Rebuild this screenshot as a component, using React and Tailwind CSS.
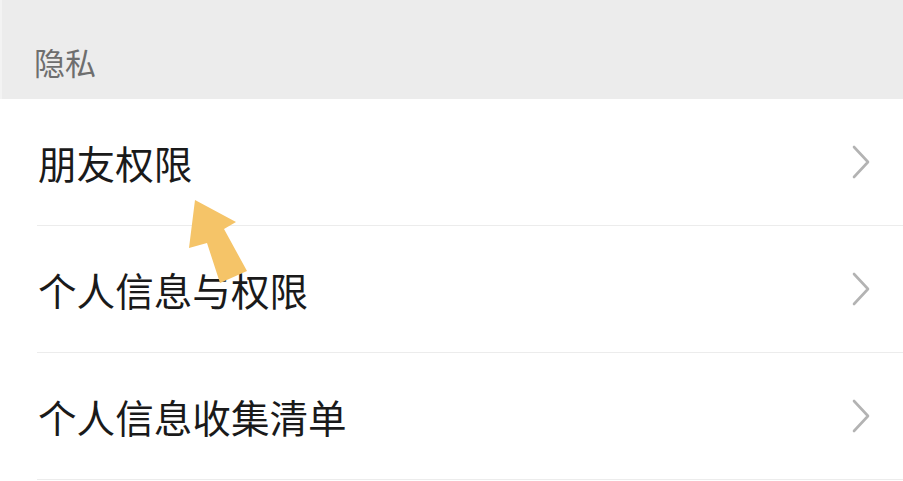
import React from "react";

const font = { fontFamily: '"Noto Sans CJK SC", "Noto Sans", sans-serif' };

function Chevron() {
  return (
    <svg width="20" height="34" viewBox="0 0 20 34" className="shrink-0">
      <path d="M3 2 L17 17 L3 32" fill="none" stroke="#b3b3b3" strokeWidth="2.6" strokeLinecap="round" strokeLinejoin="round" />
    </svg>
  );
}

function Row({ label }) {
  return (
    <div className="pl-[37px]">
      <div className="h-[127px] flex items-center justify-between border-b border-[#ececec] pr-[32px]">
        <span className="text-[38.6px] leading-none text-[#1a1a1a] pl-[1px]">{label}</span>
        <Chevron />
      </div>
    </div>
  );
}

export default function App() {
  return (
    <div className="relative w-[903px] h-[481px] bg-white overflow-hidden" style={font}>
      <div className="h-[99px] bg-[#ececec] border-l-2 border-[#f3f3f3] pl-[32px] pt-[46px]">
        <div className="text-[31px] leading-[31px] text-[#6e6e6e]">隐私</div>
      </div>
      <Row label="朋友权限" />
      <Row label="个人信息与权限" />
      <Row label="个人信息收集清单" />
      <svg className="absolute left-0 top-0 pointer-events-none" width="903" height="481" viewBox="0 0 903 481">
        <polygon
          points="195,200 236,222 224,229 247,271 220,283 207,243 189,248"
          fill="#f5c468"
        />
      </svg>
    </div>
  );
}
